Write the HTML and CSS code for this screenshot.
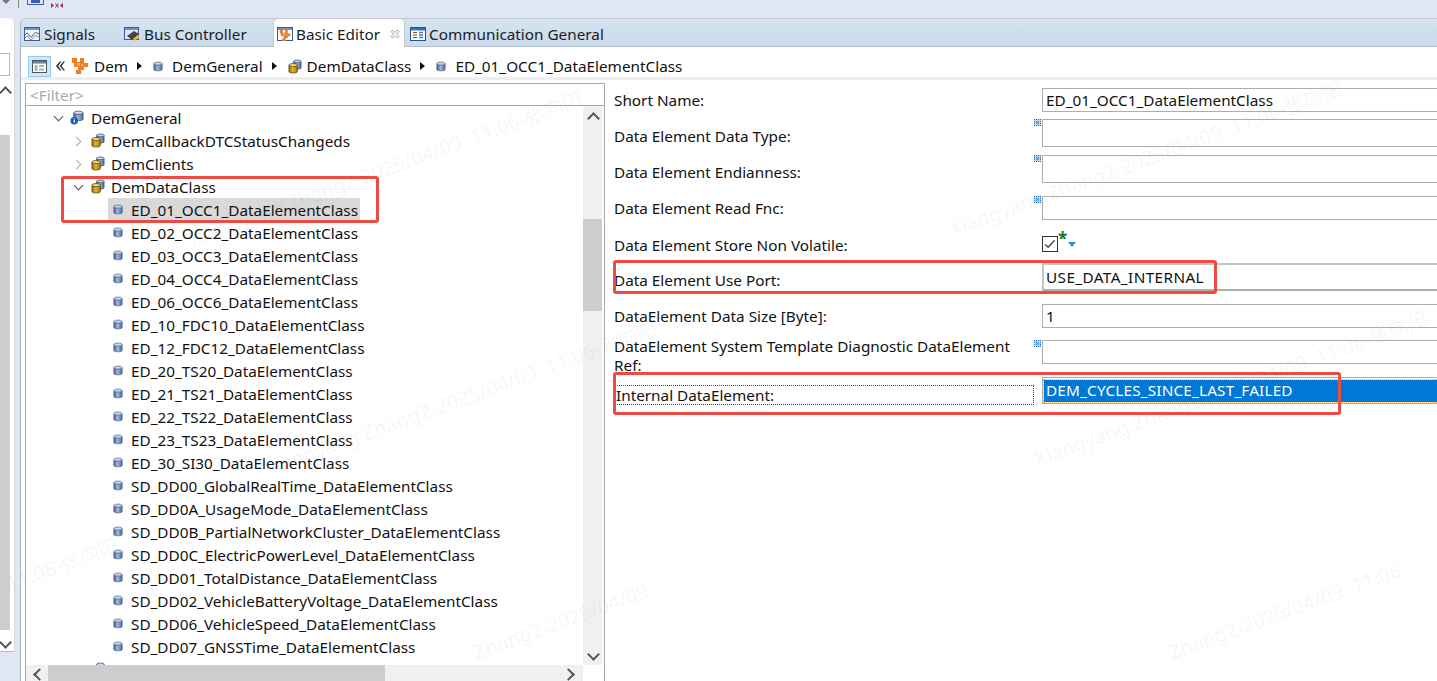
FILE: index.html
```html
<!DOCTYPE html>
<html lang="en">
<head>
<meta charset="utf-8">
<title>Basic Editor</title>
<link rel="stylesheet" href="styles.css">
</head>
<body>
<svg class="sprites" width="0" height="0" aria-hidden="true">
  <defs>
    <linearGradient id="blueCyl" x1="0" x2="1" y1="0" y2="0"><stop offset="0" stop-color="#3f5f95"/><stop offset=".45" stop-color="#a3b8d6"/><stop offset="1" stop-color="#4a6b9f"/></linearGradient>
    <linearGradient id="goldCyl" x1="0" x2="1" y1="0" y2="0"><stop offset="0" stop-color="#94680c"/><stop offset=".45" stop-color="#e6b22c"/><stop offset="1" stop-color="#a2750f"/></linearGradient>
    <symbol id="cyl" viewBox="0 0 12 12"><path d="M1 2.500v7c0 2.300 10 2.300 10 0v-7z" fill="url(#blueCyl)" stroke="#3a4f78" stroke-width=".7"/><ellipse cx="6" cy="2.500" rx="5" ry="1.900" fill="#c7d5e8" stroke="#3a4f78" stroke-width=".7"/></symbol>
    <symbol id="cyls" viewBox="0 0 15 16"><path d="M6 2.500v7c0 1.600 8 1.600 8 0v-7z" fill="url(#blueCyl)" stroke="#3a4f78" stroke-width=".8"/><ellipse cx="10" cy="2.500" rx="4" ry="1.500" fill="#c7d5e8" stroke="#3a4f78" stroke-width=".8"/><path d="M1 6.500v7c0 1.900 9 1.900 9 0v-7z" fill="url(#goldCyl)" stroke="#5d4410" stroke-width=".8"/><ellipse cx="5.500" cy="6.500" rx="4.500" ry="1.700" fill="#f2d47a" stroke="#5d4410" stroke-width=".8"/></symbol>
    <symbol id="cylinfo" viewBox="0 0 15 16"><path d="M4 3v7c0 1.800 10 1.800 10 0V3z" fill="url(#blueCyl)" stroke="#3a4f78" stroke-width=".8"/><ellipse cx="9" cy="3" rx="5" ry="1.800" fill="#c7d5e8" stroke="#3a4f78" stroke-width=".8"/><circle cx="4.500" cy="11.500" r="4" fill="#0f5fb8"/><rect x="4" y="8.800" width="1.200" height="1.200" fill="#fff"/><rect x="4" y="10.600" width="1.200" height="3" fill="#fff"/></symbol>
    <symbol id="gear" viewBox="0 0 16 16"><path d="M0 0h5v4h3V0h4v5h4v4h-4v3H9v4H4v-4h2V9H2V5H0z" fill="#e97f26"/><path d="M5 5h3v3H5zM9 6h2v2H9z" fill="#f4a860"/></symbol>
    <symbol id="square" viewBox="0 0 7 7"><rect width="7" height="7" fill="#bcd5f0"/><path d="M0 0h1v1H0zM2 0h1v1H2zM4 0h1v1H4zM6 0h1v1H6zM0 2h1v1H0zM6 2h1v1H6zM0 4h1v1H0zM6 4h1v1H6zM0 6h1v1H0zM2 6h1v1H2zM4 6h1v1H4zM6 6h1v1H6z" fill="#1d69bd"/><rect x="2" y="2" width="3" height="3" fill="#6fa3dc"/></symbol>
  </defs>
</svg>

<header class="topbar">
  <div class="topicons">
    <span class="drop"></span>
    <span class="sep"></span>
    <svg class="hex" width="17" height="5" viewBox="0 0 17 5"><path d="M.5 0v4.500h16V0" fill="none" stroke="#3b5fa8"/><rect x="4" y="0" width="9" height="3" fill="#3b5fa8"/></svg>
    <svg class="mini" width="12" height="5" viewBox="0 0 12 5"><path d="M0 0l3 2.500L0 5zM12 0L9 2.500 12 5z" fill="#b5264a"/><path d="M4.500 .5l3 4m0-4l-3 4" stroke="#7a3b55" stroke-width="1"/></svg>
  </div>
</header>

<div class="workbench">
  <aside class="sidepanel">
    <div class="sidefield"></div>
    <div class="sidescroll">
      <span class="chev up"></span>
      <div class="sidetrack"><div class="sidethumb"></div></div>
      <span class="chev down"></span>
    </div>
  </aside>

  <main class="editor">
    <nav class="tabs">
      <div class="tab"><svg width="16" height="16" viewBox="0 0 16 16"><rect x=".5" y="1.500" width="15" height="13" fill="#f4f7fb" stroke="#365a9a"/><rect x="1" y="2" width="14" height="2" fill="#6f93c8"/><path d="M1 9q2-4 4 0t4 0 6-1" fill="none" stroke="#555"/><path d="M1 12q2-4 4 0t4 0 6-1" fill="none" stroke="#888"/></svg>Signals</div>
      <div class="tab bus"><svg width="16" height="16" viewBox="0 0 16 16"><rect x=".5" y="1.500" width="14" height="12" fill="#dfe9f6" stroke="#365a9a"/><rect x="1" y="2" width="13" height="2" fill="#6f93c8"/><path d="M3 10l7-5 5 3-7 6z" fill="#444"/><path d="M9 13l6-4v3l-5 3z" fill="#e8b21f"/></svg>Bus Controller</div>
      <div class="tab active"><svg width="16" height="16" viewBox="0 0 16 16"><rect x=".5" y="1.500" width="15" height="13" fill="#fff" stroke="#365a9a"/><rect x="1" y="2" width="14" height="2" fill="#6f93c8"/><use href="#gear" x="2.500" y="4" width="11" height="11"/></svg>Basic Editor<svg class="close" width="10" height="10" viewBox="0 0 10 10"><path d="M1 2.500L2.500 1 5 3.500 7.500 1 9 2.500 6.500 5 9 7.500 7.500 9 5 6.500 2.500 9 1 7.500 3.500 5z" fill="#fff" stroke="#8d8d8d" stroke-width=".8"/></svg></div>
      <div class="tab comm"><svg width="16" height="16" viewBox="0 0 16 16"><rect x=".5" y="1.500" width="15" height="13" fill="#fff" stroke="#26508f"/><rect x="1" y="2" width="14" height="2.500" fill="#3c6fb5"/><path d="M3 6.500h4M3 9h4M3 11.500h4" stroke="#8a4b20"/><path d="M9 6.500h4M9 9h4M9 11.500h4" stroke="#3c7fc5" stroke-width="1.300"/></svg>Communication General</div>
    </nav>

    <div class="crumbs">
      <span class="crumbtoggle"><svg width="15" height="13" viewBox="0 0 15 13"><rect x=".5" y=".5" width="14" height="12" fill="#fff" stroke="#555"/><rect x="1" y="1" width="13" height="2.500" fill="#5d7fa8"/><rect x="2.500" y="5" width="3" height="6" fill="#9cc1b4"/><rect x="7" y="5" width="5" height="2" fill="#9cc1b4"/><rect x="7" y="8.500" width="5" height="2" fill="#9cc1b4"/></svg></span>
      <svg class="dbl" width="9" height="10" viewBox="0 0 9 10"><path d="M4 .5L0 5l4 4.500h1.500L2 5 5.500.5zM7.500.5L3.700 5l3.800 4.500H9L5.500 5 9 .5z" fill="#222"/></svg>
      <span class="crumb first"><svg class="ic" width="16" height="16"><use href="#gear"/></svg>Dem</span>
      <i class="arrow"></i>
      <span class="crumb"><svg class="ic" width="10" height="11"><use href="#cyl"/></svg>DemGeneral</span>
      <i class="arrow"></i>
      <span class="crumb multi"><svg class="ic" width="14" height="15"><use href="#cyls"/></svg>DemDataClass</span>
      <i class="arrow"></i>
      <span class="crumb"><svg class="ic" width="10" height="11"><use href="#cyl"/></svg>ED_01_OCC1_DataElementClass</span>
    </div>

    <div class="split">
      <section class="treepane">
        <div class="filter">&lt;Filter&gt;</div>
        <div class="treebody">
          <div class="tree">
            <div class="row l1"><span class="tw open"></span><svg class="ic" width="14" height="15"><use href="#cylinfo"/></svg>DemGeneral</div>
            <div class="row l2"><span class="tw closed"></span><svg class="ic" width="14" height="15"><use href="#cyls"/></svg>DemCallbackDTCStatusChangeds</div>
            <div class="row l2"><span class="tw closed"></span><svg class="ic" width="14" height="15"><use href="#cyls"/></svg>DemClients</div>
            <div class="row l2"><span class="tw open"></span><svg class="ic" width="14" height="15"><use href="#cyls"/></svg>DemDataClass</div>
            <div class="row l3 sel"><svg class="ic" width="10" height="11"><use href="#cyl"/></svg><span class="lbl">ED_01_OCC1_DataElementClass</span></div>
            <div class="row l3"><svg class="ic" width="10" height="11"><use href="#cyl"/></svg><span class="lbl">ED_02_OCC2_DataElementClass</span></div>
            <div class="row l3"><svg class="ic" width="10" height="11"><use href="#cyl"/></svg><span class="lbl">ED_03_OCC3_DataElementClass</span></div>
            <div class="row l3"><svg class="ic" width="10" height="11"><use href="#cyl"/></svg><span class="lbl">ED_04_OCC4_DataElementClass</span></div>
            <div class="row l3"><svg class="ic" width="10" height="11"><use href="#cyl"/></svg><span class="lbl">ED_06_OCC6_DataElementClass</span></div>
            <div class="row l3"><svg class="ic" width="10" height="11"><use href="#cyl"/></svg><span class="lbl">ED_10_FDC10_DataElementClass</span></div>
            <div class="row l3"><svg class="ic" width="10" height="11"><use href="#cyl"/></svg><span class="lbl">ED_12_FDC12_DataElementClass</span></div>
            <div class="row l3"><svg class="ic" width="10" height="11"><use href="#cyl"/></svg><span class="lbl">ED_20_TS20_DataElementClass</span></div>
            <div class="row l3"><svg class="ic" width="10" height="11"><use href="#cyl"/></svg><span class="lbl">ED_21_TS21_DataElementClass</span></div>
            <div class="row l3"><svg class="ic" width="10" height="11"><use href="#cyl"/></svg><span class="lbl">ED_22_TS22_DataElementClass</span></div>
            <div class="row l3"><svg class="ic" width="10" height="11"><use href="#cyl"/></svg><span class="lbl">ED_23_TS23_DataElementClass</span></div>
            <div class="row l3"><svg class="ic" width="10" height="11"><use href="#cyl"/></svg><span class="lbl">ED_30_SI30_DataElementClass</span></div>
            <div class="row l3"><svg class="ic" width="10" height="11"><use href="#cyl"/></svg><span class="lbl">SD_DD00_GlobalRealTime_DataElementClass</span></div>
            <div class="row l3"><svg class="ic" width="10" height="11"><use href="#cyl"/></svg><span class="lbl">SD_DD0A_UsageMode_DataElementClass</span></div>
            <div class="row l3"><svg class="ic" width="10" height="11"><use href="#cyl"/></svg><span class="lbl">SD_DD0B_PartialNetworkCluster_DataElementClass</span></div>
            <div class="row l3"><svg class="ic" width="10" height="11"><use href="#cyl"/></svg><span class="lbl">SD_DD0C_ElectricPowerLevel_DataElementClass</span></div>
            <div class="row l3"><svg class="ic" width="10" height="11"><use href="#cyl"/></svg><span class="lbl">SD_DD01_TotalDistance_DataElementClass</span></div>
            <div class="row l3"><svg class="ic" width="10" height="11"><use href="#cyl"/></svg><span class="lbl">SD_DD02_VehicleBatteryVoltage_DataElementClass</span></div>
            <div class="row l3"><svg class="ic" width="10" height="11"><use href="#cyl"/></svg><span class="lbl">SD_DD06_VehicleSpeed_DataElementClass</span></div>
            <div class="row l3"><svg class="ic" width="10" height="11"><use href="#cyl"/></svg><span class="lbl">SD_DD07_GNSSTime_DataElementClass</span></div>
            <div class="row l2"><span class="tw"></span><svg class="ic" width="14" height="15"><use href="#cyls"/></svg></div>
          </div>
          <div class="vscroll">
            <span class="chev up"></span>
            <div class="vtrack"><div class="vthumb"></div></div>
            <span class="chev down"></span>
          </div>
        </div>
        <div class="hscroll">
          <span class="chev left"></span>
          <div class="htrack"><div class="hthumb"></div></div>
          <span class="chev right"></span>
        </div>
      </section>

      <section class="form">
        <div class="frow r1"><label>Short Name:</label><div class="field">ED_01_OCC1_DataElementClass</div></div>
        <div class="frow r2"><label>Data Element Data Type:</label><svg class="mark" width="7" height="7"><use href="#square"/></svg><div class="field tall"></div></div>
        <div class="frow r2b"><label>Data Element Endianness:</label><svg class="mark" width="7" height="7"><use href="#square"/></svg><div class="field tall"></div></div>
        <div class="frow r3"><label>Data Element Read Fnc:</label><svg class="mark" width="7" height="7"><use href="#square"/></svg><div class="field"></div></div>
        <div class="frow r4"><label>Data Element Store Non Volatile:</label><div class="checkwrap"><span class="check"><svg width="14" height="14" viewBox="0 0 15 15"><path d="M2.500 8l3 3 7-7.500" fill="none" stroke="#444" stroke-width="1.400"/></svg></span><i class="star">*</i><i class="caret"></i></div></div>
        <div class="frow r5"><label>Data Element Use Port:</label><div class="field combo">USE_DATA_INTERNAL</div></div>
        <div class="frow r6"><label>DataElement Data Size [Byte]:</label><div class="field">1</div></div>
        <div class="frow r7"><label>DataElement System Template Diagnostic DataElement Ref:</label><svg class="mark" width="7" height="7"><use href="#square"/></svg><div class="field"></div></div>
        <div class="frow r8"><label class="focus">Internal DataElement:</label><div class="field combo selected"><span>DEM_CYCLES_SINCE_LAST_FAILED</span></div></div>
      </section>
    </div>
  </main>
</div>

<div class="overlay" aria-hidden="true">
  <span class="wm w1">Xiangyang.Zhang2-2025/04/09&nbsp; 11:06-张向阳</span>
  <span class="wm w2">Xiangyang.Zhang2-2025/04/09&nbsp; 11:06-张向阳</span>
  <span class="wm w3">Xiangyang.Zhang2-2025/04/09&nbsp; 11:06-张向阳</span>
  <span class="wm w4">Xiangyang.Zhang2-2025/04/09&nbsp; 11:06-张向阳</span>
  <span class="wm w5">11:06-张向阳</span>
  <span class="wm w6">Zhang2-2025/04/09</span>
  <span class="wm w7">Zhang2-2025/04/09&nbsp; 11:06</span>
  <span class="mark-box b1"></span>
  <span class="mark-box b2"></span>
  <span class="mark-box b3"></span>
</div>
</body>
</html>
```
FILE: styles.css
```css
* { box-sizing: border-box; }
html, body { margin: 0; height: 100%; }
body {
  width: 1437px; height: 681px; overflow: hidden; position: relative;
  background: #fff; color: #111;
  font-family: "Noto Sans", "Open Sans", "Noto Sans CJK SC", sans-serif;
  font-size: 15.3px;
  display: flex; flex-direction: column;
}
.sprites { position: absolute; }
svg { display: block; flex: none; }

.topbar { height: 18px; flex: none; background: #e0e6f4; padding-left: 2px; }
.topicons { display: flex; align-items: flex-start; }
.drop { width: 0; height: 0; margin: 0 8px 0 0; border: 4px solid transparent; border-top-color: #777; border-bottom: 0; }
.sep { width: 1px; height: 8px; background: #888; }
.hex { margin-left: 8px; }
.mini { margin: 3px 0 0 7px; }

.workbench { flex: 1; display: flex; min-height: 0; background: #e0e6f4; }
.sidepanel { width: 15px; height: 634px; flex: none; background: #fff; border-radius: 0 5px 0 0; display: flex; flex-direction: column; border-right: 1px solid #d4d8e2; border-bottom: 1px solid #b8bcc6; padding-top: 35px; }
.sidefield { height: 23px; border: 1px solid #b5b5b5; border-left: 0; margin-right: 4px; flex: none; background: #fff; }
.sidescroll { flex: 1; min-height: 0; display: flex; flex-direction: column; margin-top: 4px; width: 10px; }
.sidetrack { flex: 1; min-height: 0; padding-top: 39px; }
.sidethumb { height: 495px; background: #cdcdcd; }

.editor { flex: 1; min-width: 0; margin-left: 5px; display: flex; flex-direction: column; background: #fff; border-left: 1px solid #acb4c2; border-radius: 5px 0 0 0; }
.tabs { height: 29px; flex: none; display: flex; align-items: stretch; background: linear-gradient(#d5e3f1, #cbdbeb); border-bottom: 1px solid #b5bdd0; border-top: 1px solid #c4c8d0; padding-left: 3px; border-radius: 5px 0 0 0; }
.tab { display: flex; align-items: center; gap: 4px; width: 100px; white-space: nowrap; color: #1c1c1c; padding-top: 2px; }
.tab.bus { width: 149px; }
.tab.active { width: 132px; gap: 3px; background: #fff; border: 1px solid #c4c8d0; border-bottom: 0; border-radius: 5px 5px 0 0; margin-top: -1px; margin-bottom: -1px; padding-left: 3px; position: relative; }
.tab.comm { width: auto; margin-left: 5px; gap: 3px; }
.close { margin-left: 7px; }

.crumbs { height: 33px; flex: none; display: flex; align-items: center; padding: 8px 0 0 7px; border-bottom: 3px solid #efefef; }
.crumbtoggle { width: 23px; height: 21px; background: #cfe8fb; border: 1px solid #90c8f6; display: flex; align-items: center; justify-content: center; }
.dbl { margin: 0 7px 0 5px; }
.crumb { display: flex; align-items: center; gap: 9px; white-space: nowrap; }
.crumb.first { gap: 6px; }
.crumb.multi { gap: 5px; }
.arrow { width: 0; height: 0; border: 4px solid transparent; border-left: 5px solid #111; border-right: 0; margin: 0 11px 0 9px; }

.split { flex: 1; min-height: 0; display: flex; }
.treepane { width: 580px; flex: none; margin-left: 4px; margin-top: 3px; border: 1px solid #a8a8a8; border-bottom: 0; display: flex; flex-direction: column; background: #fff; min-height: 0; }
.filter { height: 22px; flex: none; color: #a9a9a9; padding-left: 4px; line-height: 22px; border-bottom: 1px solid #a8a8a8; }
.treebody { flex: 1; display: flex; min-height: 0; }
.tree { flex: 1; min-width: 0; overflow: hidden; }
.row { height: 23px; flex: none; display: flex; align-items: center; white-space: nowrap; color: #111; }
.row.l1 { padding-left: 27px; }
.row.l2 { padding-left: 47px; }
.row.l3 { padding-left: 83px; }
.row.l1 .ic { margin: 0 7px; }
.row.l2 .ic { margin: 0 6px 0 8px; }
.row.l3 .ic { margin: 0 8px 0 4px; }
.row.sel { position: relative; }
.row.sel::before { content: ""; position: absolute; left: 82px; width: 252px; top: 0; height: 23px; background: #d9d9d9; z-index: 0; }
.row.sel > * { position: relative; z-index: 1; }
.tw { width: 10px; height: 10px; position: relative; flex: none; }
.tw.open::before, .tw.closed::before { content: ""; position: absolute; width: 6px; height: 6px; border-right: 1.500px solid #555; border-bottom: 1.500px solid #555; }
.tw.open::before { left: 2px; top: 0; transform: rotate(45deg); }
.tw.closed::before { left: 0; top: 2px; transform: rotate(-45deg); border-color: #aaa; }

.vscroll { width: 19px; flex: none; margin-right: 2px; display: flex; flex-direction: column; background: #f0f0f0; }
.vtrack { flex: 1; min-height: 0; padding-top: 95px; }
.vthumb { height: 92px; background: #cdcdcd; }
.hscroll { height: 16px; flex: none; display: flex; background: #f0f0f0; margin-right: 21px; }
.htrack { flex: 1; }
.hthumb { width: 337px; height: 100%; background: #cdcdcd; }

.chev { width: 19px; height: 18px; flex: none; position: relative; display: block; }
.chev::before { content: ""; position: absolute; left: 6px; top: 6px; width: 7px; height: 7px; border-top: 2px solid #555; border-left: 2px solid #555; }
.chev.up::before { transform: rotate(45deg); top: 8px; }
.chev.down::before { transform: rotate(225deg); top: 3px; }
.chev.left, .chev.right { width: 22px; height: 16px; }
.chev.left::before { transform: rotate(-45deg); left: 9px; top: 5px; }
.chev.right::before { transform: rotate(135deg); left: 3px; top: 5px; }
.sidescroll .chev { width: 10px; height: 16px; }
.sidescroll .chev::before { left: 1px; }

.form { flex: 1; min-width: 0; padding-top: 8px; overflow: hidden; }
.frow { display: flex; position: relative; padding-left: 9px; }
.frow label { width: 428px; flex: none; line-height: 19px; color: #111; }
.field { flex: 1; min-width: 0; margin-right: -4px; height: 24px; border: 1px solid #adadad; padding: 0 3px; line-height: 22px; white-space: nowrap; color: #111; background: #fff; }
.field.tall { height: 28px; }
.mark { position: absolute; left: 429px; top: 0; }
.r1 { height: 31px; } .r1 label { padding-top: 3px; }
.r2 { height: 36px; align-items: flex-start; } .r2 label { padding-top: 8px; }
.r2b { height: 41px; align-items: flex-start; } .r2b label { padding-top: 8px; }
.r3 { height: 40px; } .r3 label { padding-top: 3px; }
.r4 { height: 27px; }
.r5 { height: 41px; } .r5 label { padding-top: 8px; }
.r5 .field { height: 28px; border-width: 2px; border-color: #c5c5c5 #adadad #adadad #c5c5c5; padding: 0 2px; line-height: 25px; letter-spacing: .4px; }
.r6 { height: 36px; } .r6 label { padding-top: 3px; }
.r7 { height: 37px; } .r7 label { width: 405px; margin-right: 23px; margin-top: -3px; }
.r8 label.focus { width: 419px; margin-right: 8px; margin-left: 1px; height: 20px; margin-top: 8px; border: 1px dotted #444; line-height: 18px; }
.r8 .field.selected { height: 27px; border: 1px solid #adadad; padding: 2px 0 0 1px; letter-spacing: .18px; }
.field.selected span { display: block; height: 22px; background: #0078d7; color: #fff; padding: 0 2px; line-height: 21px; outline: 1px dotted #e6b05a; }

.checkwrap { display: flex; align-items: flex-start; }
.check { width: 16px; height: 16px; border: 1px solid #333; background: #fff; }
.star { font-style: normal; color: #0e7a20; font-weight: 700; font-size: 17px; line-height: 12px; margin-top: -3px; width: 10px; }
.caret { width: 0; height: 0; border: 4px solid transparent; border-top: 5px solid #2a8fe0; border-bottom: 0; margin: 6px 0 0 0; }

.overlay { position: absolute; inset: 0; pointer-events: none; }
.wm { position: absolute; color: rgba(120,120,120,.07); font-size: 20px; white-space: nowrap; transform: rotate(-20deg); transform-origin: 0 0; }
.w1 { left: 185px; top: 225px; }
.w2 { left: 945px; top: 215px; }
.w3 { left: 1030px; top: 445px; }
.w4 { left: 260px; top: 455px; }
.w5 { left: 2px; top: 570px; }
.w6 { left: 470px; top: 640px; }
.w7 { left: 1165px; top: 640px; }
.mark-box { position: absolute; border: 3px solid #ef4b43; border-radius: 3px; }
.b1 { left: 61px; top: 176px; width: 318px; height: 47px; }
.b2 { left: 613px; top: 260px; width: 604px; height: 34px; }
.b3 { left: 613px; top: 372px; width: 728px; height: 43px; }
```
